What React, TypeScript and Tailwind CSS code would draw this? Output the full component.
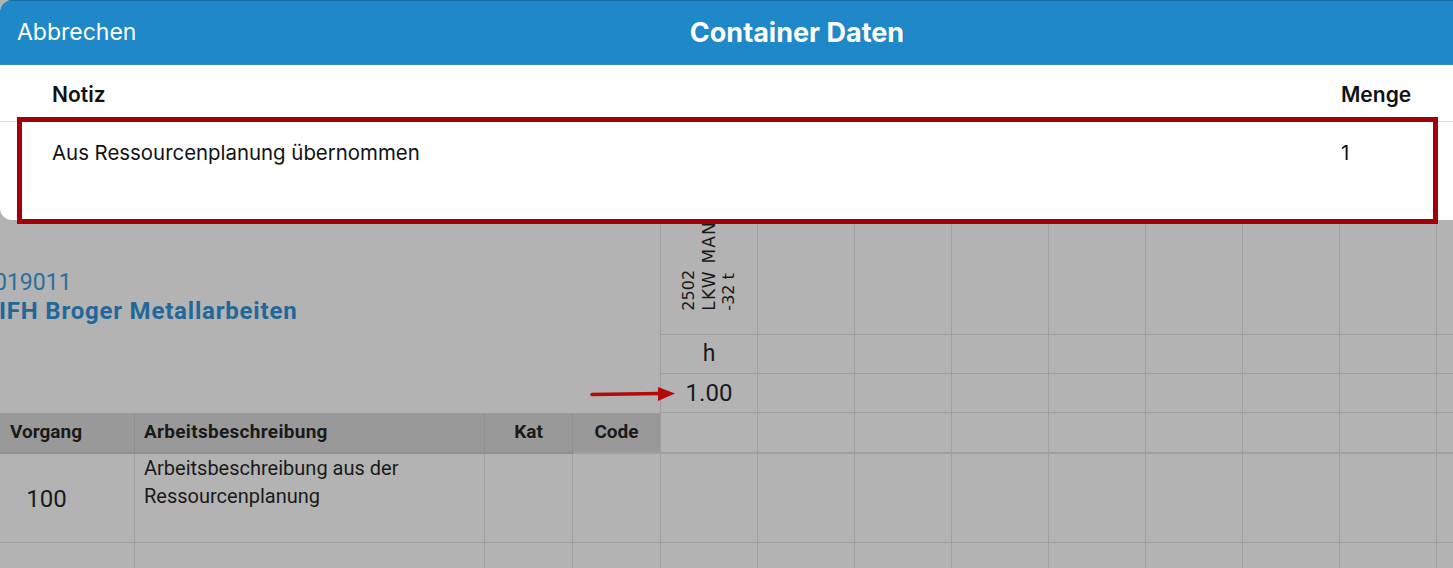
import React from 'react';

const line = 'border-[#9f9f9f]';
const cols = [1, 2, 3, 4, 5, 6, 7, 8, 9];

function ResourceColumns({ row }: { row: number }) {
    return (
        <>
            {cols.map(c => (
                <div
                    key={`${row}-${c}`}
                    className={`border-r border-b ${line} ${row === 3 ? 'border-b-2' : ''}`}
                />
            ))}
        </>
    );
}

function Background() {
    return (
        <div
            className="grid grid-cols-[135px_350px_88px_88px_repeat(9,97px)] grid-rows-[335px_39px_39px_41px_89px_60px] font-['Roboto',sans-serif] text-[#1a1a1a]"
        >
            {/* order info, spans the first three rows */}
            <div className={`col-span-4 row-span-3 border-r ${line} pt-[269px]`}>
                <div className="-ml-[6px] text-[23px] leading-[28px] text-[#2a6f9f]">019011</div>
                <div className="-ml-[1px] text-[24px] font-bold leading-[28px] tracking-[0.8px] text-[#1f6899]">
                    IFH Broger Metallarbeiten
                </div>
            </div>

            {/* resource header */}
            <div className={`flex items-end justify-center border-r border-b ${line} pb-[23px]`}>
                <div className="rotate-180 font-['DejaVu_Sans',sans-serif] text-[16px] leading-[20px] [writing-mode:vertical-rl]">
                    2502
                    <br />
                    <span className="text-[17px] tracking-[1.2px]">LKW MAN</span>
                    <br />
                    -32 t
                </div>
            </div>
            {cols.slice(1).map(c => (
                <div key={`h-${c}`} className={`border-r border-b ${line}`} />
            ))}

            {/* unit row */}
            <div className={`flex items-center justify-center border-r border-b ${line} text-[23px]`}>h</div>
            {cols.slice(1).map(c => (
                <div key={`u-${c}`} className={`border-r border-b ${line}`} />
            ))}

            {/* amount row */}
            <div className={`flex items-center justify-center border-r border-b ${line} text-[24px]`}>1.00</div>
            {cols.slice(1).map(c => (
                <div key={`a-${c}`} className={`border-r border-b ${line}`} />
            ))}

            {/* table header */}
            <div className="flex items-center border-r border-b-2 border-[#8f8f8f] bg-[#999999] pl-[10px] text-[19px] font-bold">
                Vorgang
            </div>
            <div className="flex items-center border-r border-b-2 border-[#8f8f8f] bg-[#999999] pl-[9px] text-[19px] font-bold tracking-[0.3px]">
                Arbeitsbeschreibung
            </div>
            <div className="flex items-center justify-center border-r border-b-2 border-[#8f8f8f] bg-[#999999] text-[19px] font-bold">
                Kat
            </div>
            <div className={`flex items-center justify-center border-r border-b-2 ${line} bg-[#999999] text-[19px] font-bold`}>
                Code
            </div>
            <ResourceColumns row={3} />

            {/* data row */}
            <div className={`flex items-center justify-center border-r border-b ${line} pr-[41px] pt-[2px] text-[24px]`}>
                100
            </div>
            <div className={`border-r border-b ${line} pl-[9px] pt-[0px] text-[20px] leading-[28px]`}>
                Arbeitsbeschreibung aus der
                <br />
                Ressourcenplanung
            </div>
            <div className={`border-r border-b ${line}`} />
            <div className={`border-r border-b ${line}`} />
            <ResourceColumns row={4} />

            {/* next row */}
            <div className={`border-r ${line}`} />
            <div className={`border-r ${line}`} />
            <div className={`border-r ${line}`} />
            <div className={`border-r ${line}`} />
            {cols.map(c => (
                <div key={`n-${c}`} className={`border-r ${line}`} />
            ))}
        </div>
    );
}

export default function App() {
    return (
        <div className="relative h-[568px] w-[1453px] overflow-hidden bg-[#b3b3b3]">
            <Background />

            {/* modal sheet */}
            <div className="absolute left-0 top-0 h-[220px] w-[1594px] overflow-hidden rounded-[12px] bg-white font-['Inter',sans-serif] text-[#111]">
                <div className="grid h-[65px] grid-cols-[1fr_auto_1fr] items-center border-t border-b border-t-[#1a6ea6] border-b-[#3c8fb8] bg-[#1f88c9] text-white">
                    <span className="pl-[17px] text-[23px]">Abbrechen</span>
                    <span className="pt-[2px] text-[27px] font-bold">Container Daten</span>
                    <span />
                </div>
                <div className="flex h-[57px] items-center border-b border-[#dcdcdc] pt-[4px] text-[21px] font-semibold">
                    <span className="flex-1 pl-[52px]">Notiz</span>
                    <span className="w-[253px]">Menge</span>
                </div>
                <div className="flex pt-[18px] text-[20.4px] leading-[26px]">
                    <span className="flex-1 pl-[52px]">Aus Ressourcenplanung übernommen</span>
                    <span className="w-[253px]">1</span>
                </div>
            </div>

            {/* annotation frame */}
            <div className="absolute left-[17px] top-[117px] h-[107px] w-[1421px] border-[5px] border-[#a4000a]" />

            {/* annotation arrow */}
            <svg className="absolute left-[590px] top-[384px]" width="88" height="20" viewBox="0 0 88 20">
                <path d="M2 10.5 L70 9.5" stroke="#b30a0a" strokeWidth="3.5" strokeLinecap="round" />
                <path d="M68 3 L85 9.5 L68 17 Z" fill="#b30a0a" />
            </svg>
        </div>
    );
}
